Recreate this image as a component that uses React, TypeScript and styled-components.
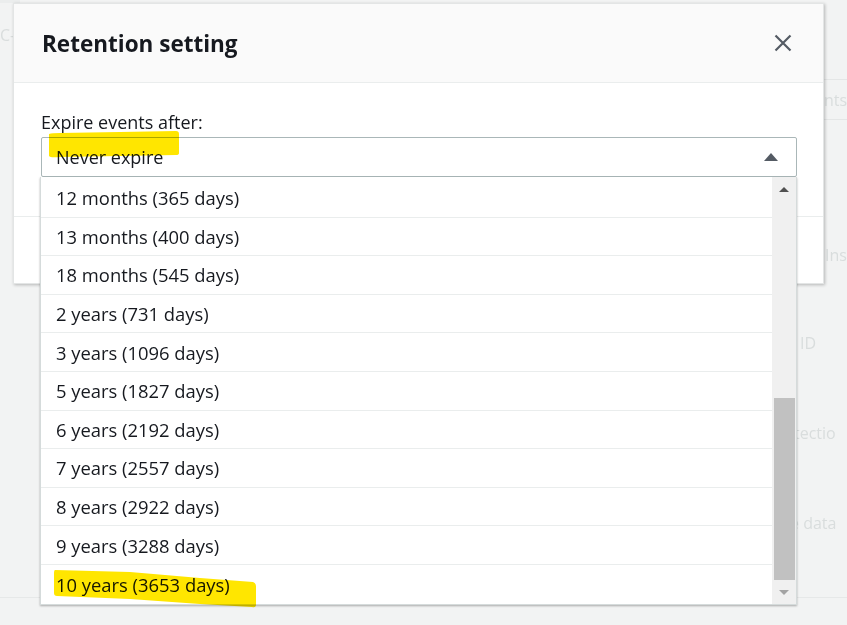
import React from "react";
import styled, { createGlobalStyle } from "styled-components";

const OPTIONS = [
  "12 months (365 days)",
  "13 months (400 days)",
  "18 months (545 days)",
  "2 years (731 days)",
  "3 years (1096 days)",
  "5 years (1827 days)",
  "6 years (2192 days)",
  "7 years (2557 days)",
  "8 years (2922 days)",
  "9 years (3288 days)",
  "10 years (3653 days)",
];

// faint text of the page behind the modal (right edge)
const BACK_ROWS = [
  { text: "Ins", indent: 35, height: 88 },
  { text: "ID", indent: 10, height: 88 },
  { text: "tectio", indent: 4, height: 92 },
  { text: "e data", indent: 0, height: 88 },
];

const App = () => {
  return (
    <>
      <GlobalStyle />
      <Page>
        <BackLeft>
          <BackText>C-</BackText>
        </BackLeft>
        <BackRight>
          <BackHeader>
            <BackText>nts</BackText>
          </BackHeader>
          <BackSpacer height={91} />
          {BACK_ROWS.map((r) => (
            <BackRow key={r.text} height={r.height} indent={r.indent}>
              <BackText>{r.text}</BackText>
            </BackRow>
          ))}
        </BackRight>
        <BackLine />

        <Modal>
          <Header>
            <Title>Retention setting</Title>
            <CloseButton aria-label="Close">
              <svg width="18" height="18" viewBox="0 0 18 18">
                <path
                  d="M1.5 1.5 L16.5 16.5 M16.5 1.5 L1.5 16.5"
                  stroke="#545b64"
                  strokeWidth="2.2"
                  fill="none"
                />
              </svg>
            </CloseButton>
          </Header>
          <Body>
            <Label>Expire events after:</Label>
            <SelectWrap>
              <SelectBox>
                <span>Never expire</span>
                <Caret />
              </SelectBox>
              <Dropdown>
                <OptionList>
                  {OPTIONS.map((o, idx) => (
                    <Option key={o} last={idx === OPTIONS.length - 1}>
                      {o}
                    </Option>
                  ))}
                </OptionList>
                <ScrollBar>
                  <ScrollButton>
                    <ArrowUp />
                  </ScrollButton>
                  <ScrollTrack>
                    <Thumb />
                  </ScrollTrack>
                  <ScrollButton>
                    <ArrowDown />
                  </ScrollButton>
                </ScrollBar>
              </Dropdown>
            </SelectWrap>
          </Body>
          <Footer />
        </Modal>

        <Marker width="847" height="625" viewBox="0 0 847 625">
          <path
            d="M49 134 Q52 133 60 133 L120 132 L176 131 Q179 131 179 134 L179 153 Q179 155 176 155 L120 156 L60 157 Q50 158 49 156 Z"
            fill="#ffe600"
          />
          <path
            d="M55 570 L130 572 L200 578 L253 582 Q256 583 256 586 L256 605 Q256 608 252 607 L200 604 L130 599 L57 596 Q54 596 54 593 L54 573 Q54 570 55 570 Z"
            fill="#ffe600"
          />
        </Marker>
      </Page>
    </>
  );
};

const GlobalStyle = createGlobalStyle`
  html, body {
    margin: 0;
    padding: 0;
    background: #f2f3f3;
  }
  body {
    font-family: "Open Sans", "Noto Sans", Arial, sans-serif;
    color: #16191f;
  }
  * { box-sizing: border-box; }
`;

const Page = styled.div`
  position: relative;
  width: 847px;
  height: 625px;
  overflow: hidden;
  background: #f2f3f3;
  display: flex;
  justify-content: space-between;
`;

const BackLeft = styled.div`
  width: 20px;
  padding-top: 21px;
  border-top: 3px solid #ebeded;
`;

const BackText = styled.span`
  font-size: 16px;
  color: #d9dddd;
  white-space: nowrap;
`;

const BackRight = styled.div`
  width: 57px;
  flex-shrink: 0;
  padding-top: 79px;
  display: flex;
  flex-direction: column;
`;

const BackHeader = styled.div`
  height: 41px;
  border-top: 1px solid #e4e6e6;
  border-bottom: 1px solid #e4e6e6;
  display: flex;
  align-items: center;
  padding-left: 34px;
`;

const BackSpacer = styled.div<{ height: number }>`
  height: ${(p) => p.height}px;
`;

const BackRow = styled.div<{ height: number; indent: number }>`
  height: ${(p) => p.height}px;
  padding-left: ${(p) => p.indent}px;
  display: flex;
  align-items: center;
`;

const BackLine = styled.div`
  position: absolute;
  left: 0;
  right: 0;
  top: 597px;
  border-top: 1px solid #e6e8e8;
`;

const Modal = styled.div`
  position: absolute;
  left: 13px;
  top: 3px;
  width: 811px;
  height: 281px;
  background: #fff;
  border: 1px solid #e3e5e5;
  box-shadow: 1px 1px 3px rgba(0, 0, 0, 0.25);
  display: flex;
  flex-direction: column;
`;

const Header = styled.div`
  height: 79px;
  flex-shrink: 0;
  background: #fafafa;
  border-bottom: 1px solid #eaeded;
  display: flex;
  align-items: center;
  justify-content: space-between;
  padding: 0 30px 0 28px;
`;

const Title = styled.h2`
  margin: 0;
  font-size: 22.5px;
  font-weight: 700;
  color: #16191f;
`;

const CloseButton = styled.button`
  border: 0;
  background: transparent;
  padding: 0;
  width: 20px;
  height: 20px;
  display: flex;
  align-items: center;
  justify-content: center;
`;

const Body = styled.div`
  height: 134px;
  flex-shrink: 0;
  padding: 28px 26px 0 27px;
  border-bottom: 1px solid #eaeded;
`;

const Label = styled.div`
  font-size: 18px;
  line-height: 22px;
  margin-bottom: 4px;
  color: #16191f;
`;

const SelectWrap = styled.div`
  position: relative;
`;

const SelectBox = styled.div`
  height: 40px;
  border: 1px solid #aab7b8;
  border-radius: 2px;
  background: #fff;
  display: flex;
  align-items: center;
  justify-content: space-between;
  padding: 0 18px 0 14px;
  font-size: 18px;
  color: #16191f;
`;

const Caret = styled.span`
  width: 0;
  height: 0;
  border-left: 7px solid transparent;
  border-right: 7px solid transparent;
  border-bottom: 8px solid #545b64;
  margin-top: -1px;
`;

const Footer = styled.div`
  flex: 1;
`;

const Dropdown = styled.div`
  position: absolute;
  top: 100%;
  left: -1px;
  width: 757px;
  height: 428px;
  background: #fff;
  border: 1px solid #d5dbdb;
  border-top: 0;
  box-shadow: 0 1px 2px rgba(0, 0, 0, 0.3);
  display: flex;
  z-index: 2;
`;

const OptionList = styled.div`
  flex: 1;
  padding-top: 2px;
`;

const Option = styled.div<{ last?: boolean }>`
  height: 38.6px;
  border-bottom: ${(p) => (p.last ? "0" : "1px solid #eaeded")};
  display: flex;
  align-items: center;
  padding-left: 15px;
  font-size: 18.4px;
  color: #16191f;
  white-space: nowrap;
`;

const ScrollBar = styled.div`
  width: 24px;
  background: #f0f0f0;
  display: flex;
  flex-direction: column;
`;

const ScrollButton = styled.div`
  height: 24px;
  display: flex;
  align-items: center;
  justify-content: center;
`;

const ArrowUp = styled.span`
  width: 0;
  height: 0;
  border-left: 5px solid transparent;
  border-right: 5px solid transparent;
  border-bottom: 5px solid #505050;
`;

const ArrowDown = styled.span`
  width: 0;
  height: 0;
  border-left: 5px solid transparent;
  border-right: 5px solid transparent;
  border-top: 5px solid #a3a3a3;
`;

const ScrollTrack = styled.div`
  flex: 1;
  display: flex;
  flex-direction: column;
  justify-content: flex-end;
  padding: 0 1px 0 2px;
`;

const Thumb = styled.div`
  height: 182px;
  background: #c1c1c1;
`;

const Marker = styled.svg`
  position: absolute;
  left: 0;
  top: 0;
  pointer-events: none;
  mix-blend-mode: multiply;
  z-index: 5;
`;

export default App;
